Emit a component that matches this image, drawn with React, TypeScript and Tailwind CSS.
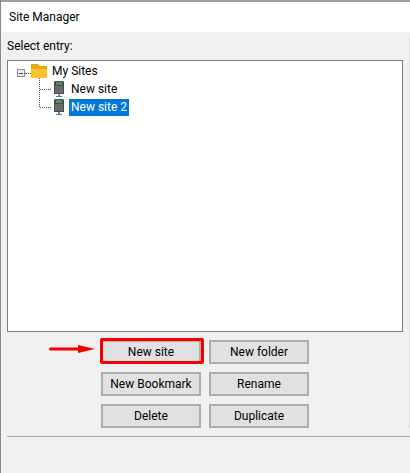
const buttonClass =
  "h-[24px] w-[100px] border-2 border-[#adadad] bg-[#e1e1e1] text-[12px] leading-none text-black"

const specks = [155, 178, 292, 310, 342, 362, 380, 398, 418, 462]

function SiteIcon() {
  return (
    <svg width="10" height="17" viewBox="0 0 10 17" className="shrink-0">
      <path d="M1 0h8l1 1v12H0V1z" fill="#4a4a4a" />
      <rect x="2" y="1" width="6" height="3" fill="#3f9a5a" />
      <rect x="1" y="5" width="8" height="7" fill="#6b6b6b" />
      <rect x="4" y="13" width="2" height="2" fill="#7f8f9c" />
      <rect x="2" y="15" width="6" height="1" fill="#3a7fb8" />
    </svg>
  )
}

export default function App() {
  return (
    <div className="relative h-[473px] w-[410px] overflow-hidden border-l border-[#8a8a8a] bg-[#f0f0f0] font-['Roboto',sans-serif] text-[12px] text-black">
      {specks.map((y) => (
        <span key={y} className="absolute left-[-1px] h-[6px] w-px bg-[#5a1a3a]" style={{ top: y }} />
      ))}
      <span className="absolute right-0 top-[38px] h-[390px] w-px bg-[#d8d8d8]" />

      <div className="flex h-[32px] items-center border-t-2 border-[#a0a0a0] bg-white pl-[8px]">
        Site Manager
      </div>

      <div className="pl-[6px] pt-[6px]">
        <div className="h-[22px] leading-[16px]">Select entry:</div>

        <div className="h-[272px] w-[396px] border border-[#7a7a85] bg-white pl-[9px] pt-[2px]">
          <div className="flex h-[17px] items-center">
            <span className="mt-[3px] flex h-[8px] w-[8px] shrink-0 items-center justify-center border border-[#8a8a8a] bg-[#eeeeee]">
              <span className="h-px w-[4px] bg-[#1f4fa0]" />
            </span>
            <span className="mt-[3px] w-[6px] border-t border-dotted border-[#555]" />
            <svg width="16" height="15" viewBox="0 0 16 15" className="shrink-0">
              <path d="M0 0h7l2 2h7v5H0z" fill="#e6a817" />
              <rect x="0" y="5" width="16" height="9" fill="#fbc02d" />
            </svg>
            <span className="mb-[2px] ml-[5px]">My Sites</span>
          </div>

          <div className="ml-[22px] flex">
            <div className="mt-[-2px] h-[29px] w-px border-l border-dotted border-[#555]" />
            <div className="mt-[1px] flex flex-col gap-[1px]">
              <div className="flex h-[17px] items-center">
                <span className="mr-[3px] w-[11px] border-t border-dotted border-[#555]" />
                <SiteIcon />
                <span className="mb-[2px] ml-[7px]">New site</span>
              </div>
              <div className="flex h-[17px] items-center">
                <span className="mr-[3px] w-[11px] border-t border-dotted border-[#555]" />
                <SiteIcon />
                <span className="mb-[1px] ml-[5px] bg-[#0078d7] px-[2px] leading-[17px] text-white">New site 2</span>
              </div>
            </div>
          </div>
        </div>

        <div className="mt-[8px] flex gap-[8px] pl-[94px]">
          <div className="relative h-[24px]">
            <button className={buttonClass}>New site</button>
            <span className="absolute left-[-1px] top-[-2px] h-[26px] w-[104px] rounded-[2px] border-[3px] border-[#f40000]" />
            <svg width="46" height="10" viewBox="0 0 46 10" className="absolute left-[-52px] top-[4px]">
              <rect x="0" y="3.5" width="30" height="3" rx="1.5" fill="#f40000" />
              <path d="M29 1l17 4-17 4z" fill="#f40000" />
            </svg>
          </div>
          <button className={buttonClass}>New folder</button>
        </div>
        <div className="mt-[8px] flex gap-[8px] pl-[94px]">
          <button className={buttonClass}>New Bookmark</button>
          <button className={buttonClass}>Rename</button>
        </div>
        <div className="mt-[8px] flex gap-[8px] pl-[94px]">
          <button className={buttonClass}>Delete</button>
          <button className={buttonClass}>Duplicate</button>
        </div>

        <div className="mt-[8px] h-px bg-[#a9a9a9]" />
      </div>
    </div>
  )
}
